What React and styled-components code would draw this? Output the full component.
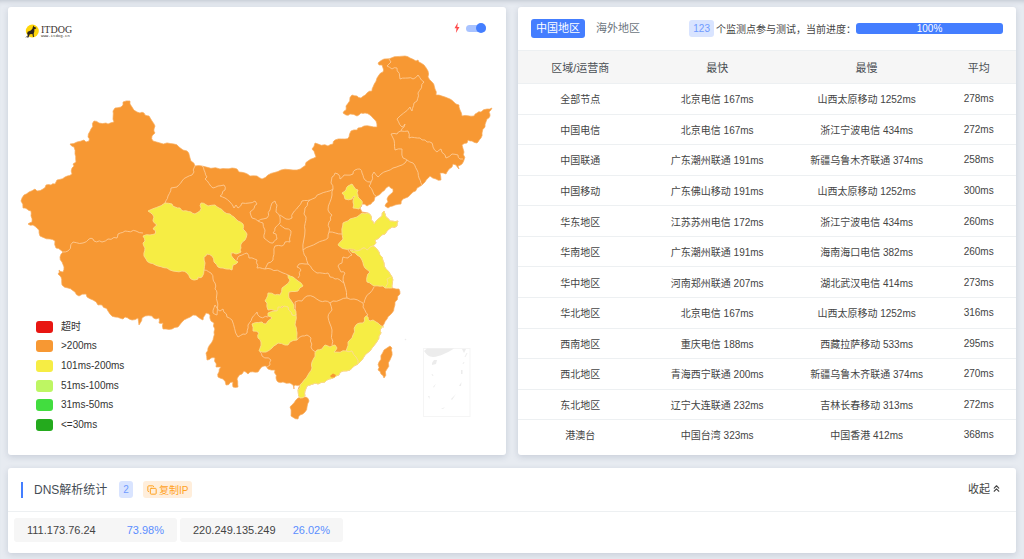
import React from "react";
import styled, { createGlobalStyle } from "styled-components";
import { ChevronsUp, Copy } from "lucide-react";

const GlobalStyle = createGlobalStyle`
  *, *::before, *::after { box-sizing: border-box; }
  body {
    margin: 0;
    background: #e7ebf1;
    color: #444;
    font-family: "Liberation Sans", "Noto Sans CJK SC", sans-serif;
    font-size: 10px;
  }
  button { font-family: inherit; border: 0; cursor: pointer; }
`;

const Page = styled.main`
  display: grid;
  grid-template-columns: 1fr 1fr;
  gap: 13px 12px;
  padding: 7px 8px 6px;
  box-shadow: inset 0 5px 5px -4px rgba(90, 105, 125, 0.3);
`;

const Card = styled.section`
  background: #fff;
  border-radius: 3px;
  box-shadow: 0 2px 6px rgba(60, 80, 110, 0.18);
  grid-column: ${(p) => (p.$wide ? "1 / -1" : "auto")};
  min-width: 0;
`;

/* ---------- map card ---------- */

const MapHeader = styled.header`
  display: flex;
  justify-content: space-between;
  align-items: flex-start;
  height: 37px;
  padding: 14px 20px 0 17px;
`;

const Logo = styled.a`
  display: flex;
  align-items: center;
  gap: 2px;
  padding-top: 3px;
  color: #3a3330;
  text-decoration: none;
`;

const LogoWords = styled.span`
  display: flex;
  flex-direction: column;
  font-family: "Liberation Serif", serif;
  font-size: 10px;
  line-height: 9px;
  small {
    font-family: "Liberation Mono", monospace;
    font-size: 4px;
    line-height: 4px;
  }
`;

const SwitchLabel = styled.label`
  display: flex;
  align-items: center;
  gap: 6px;
  height: 14px;
`;

const Switch = styled.input`
  appearance: none;
  position: relative;
  width: 20px;
  height: 7px;
  margin: 0;
  border-radius: 4px;
  background: #a9c3ff;
  &::before {
    content: "";
    position: absolute;
    top: -2px;
    left: 0;
    width: 10px;
    height: 10px;
    border-radius: 50%;
    background: #447eff;
  }
  &:checked::before { left: 10px; }
`;

const MapStage = styled.div`
  display: grid;
  > * { grid-area: 1 / 1; }
`;

const MapSvg = styled.svg`
  display: block;
  width: 100%;
  height: auto;
`;

const Legend = styled.ul`
  display: grid;
  grid-auto-rows: 1fr;
  align-self: end;
  justify-self: start;
  height: 118px;
  margin: 0 0 20px 28px;
  padding: 0;
  list-style: none;
  z-index: 1;
`;

const LegendItem = styled.li`
  display: flex;
  align-items: center;
  gap: 8px;
  color: #333;
  line-height: 14px;
  &::before {
    content: "";
    width: 17px;
    height: 12px;
    border-radius: 3px;
    background: ${(p) => p.$color};
  }
`;

/* ---------- statistics card ---------- */

const StatsHeader = styled.header`
  display: flex;
  align-items: center;
  justify-content: space-between;
  height: 43px;
  padding: 0 13px;
`;

const Tabs = styled.div`
  display: flex;
  gap: 6px;
`;

const Tab = styled.button`
  height: 19px;
  padding: 0 5px;
  border-radius: 3px;
  font-size: 11px;
  line-height: 17px;
  background: ${(p) => (p.$active ? "#447eff" : "transparent")};
  color: ${(p) => (p.$active ? "#fff" : "#6c757d")};
`;

const Progress = styled.div`
  display: flex;
  align-items: center;
  white-space: nowrap;
`;

const Badge = styled.span`
  display: inline-flex;
  align-items: center;
  justify-content: center;
  height: 17px;
  padding: 0 4px;
  border-radius: 3px;
  background: #d9e4ff;
  color: #6f9bff;
  font-size: 10px;
`;

const ProgressText = styled.span`
  margin-left: 2px;
`;

const ProgressBar = styled.div`
  width: 147px;
  height: 11px;
  overflow: hidden;
  border-radius: 3px;
  background: #e9ecef;
`;

const ProgressFill = styled.div`
  height: 100%;
  background: #447eff;
  color: #fff;
  text-align: center;
  line-height: 11px;
`;

const Table = styled.table`
  width: 100%;
  height: 399px;
  table-layout: fixed;
  border-collapse: separate;
  border-spacing: 0;
  text-align: center;
  th, td {
    padding: 0;
    border-bottom: 1px solid #edf0f2;
    white-space: nowrap;
  }
  th {
    height: 34px;
    border-top: 1px solid #edf0f2;
    background: #f6f6f6;
    color: #4a4f54;
    font-size: 11px;
    font-weight: 400;
  }
  tbody tr:last-child td { border-bottom: 0; }
`;

const HeadCell = styled.th`
  width: ${(p) => p.$width};
`;

/* ---------- DNS card ---------- */

const DnsHeader = styled.header`
  display: flex;
  align-items: center;
  height: 44px;
  padding: 0 14px 0 13px;
  border-bottom: 1px solid #edf0f2;
`;

const DnsTitle = styled.h2`
  margin: 0 12px 0 0;
  padding-left: 11px;
  border-left: 2px solid #447eff;
  color: #454d55;
  font-size: 12px;
  font-weight: 400;
  line-height: 16px;
`;

const CopyButton = styled.button`
  display: flex;
  align-items: center;
  gap: 2px;
  height: 17px;
  margin-left: 10px;
  padding: 0 4px;
  border-radius: 3px;
  background: #ffeedb;
  color: #ffa21f;
  font-size: 10px;
`;

const FoldButton = styled.button`
  display: flex;
  align-items: center;
  gap: 1px;
  margin-left: auto;
  padding: 0 0 3px;
  background: none;
  color: #444;
  font-size: 11px;
`;

const IpList = styled.ul`
  display: flex;
  flex-wrap: wrap;
  gap: 3px;
  margin: 0;
  padding: 6px 6px 11px;
  list-style: none;
`;

const IpItem = styled.li`
  display: flex;
  align-items: center;
  justify-content: space-between;
  width: 163px;
  height: 24px;
  padding: 0 13px;
  border-radius: 3px;
  background: #f6f6f6;
  font-size: 11px;
  span:last-child { color: #5b8eff; }
`;

/* ---------- data ---------- */

const legend = [
  ["超时", "#e81612"],
  [">200ms", "#f79833"],
  ["101ms-200ms", "#f6ed44"],
  ["51ms-100ms", "#bef663"],
  ["31ms-50ms", "#42dd3f"],
  ["<=30ms", "#24aa1d"],
];

const rows = [
  ["全部节点", "北京电信 167ms", "山西太原移动 1252ms", "278ms"],
  ["中国电信", "北京电信 167ms", "浙江宁波电信 434ms", "272ms"],
  ["中国联通", "广东潮州联通 191ms", "新疆乌鲁木齐联通 374ms", "258ms"],
  ["中国移动", "广东佛山移动 191ms", "山西太原移动 1252ms", "300ms"],
  ["华东地区", "江苏苏州电信 172ms", "浙江宁波电信 434ms", "260ms"],
  ["华南地区", "广东潮州联通 191ms", "海南海口电信 382ms", "260ms"],
  ["华中地区", "河南郑州联通 207ms", "湖北武汉电信 414ms", "273ms"],
  ["华北地区", "北京电信 167ms", "山西太原移动 1252ms", "316ms"],
  ["西南地区", "重庆电信 188ms", "西藏拉萨移动 533ms", "295ms"],
  ["西北地区", "青海西宁联通 200ms", "新疆乌鲁木齐联通 374ms", "270ms"],
  ["东北地区", "辽宁大连联通 232ms", "吉林长春移动 313ms", "272ms"],
  ["港澳台", "中国台湾 323ms", "中国香港 412ms", "368ms"],
];

const columns = [
  ["区域/运营商", "25%"],
  ["最快", "30%"],
  ["最慢", "30%"],
  ["平均", "15%"],
];

const ips = [
  ["111.173.76.24", "73.98%"],
  ["220.249.135.249", "26.02%"],
];

const mainland =
  "43,189 46,185 51,185 55,184 57,180 65,177 72,174 72,168 74,166 73,164 76,162 75,154 74,147 70,144 77,142 84,140 86,142 89,141 88,137 91,129 94,121 99,123 106,123 108,124 114,122 113,111 115,108 121,107 123,105 123,102 130,101 130,104 132,107 137,112 140,113 144,113 145,115 149,116 152,121 155,126 154,129 155,133 152,136 153,141 160,143 174,144 179,147 183,150 187,151 190,158 195,166 202,166 220,169 232,168 237,169 239,172 245,173 250,176 257,176 262,179 268,175 281,170 297,170 303,167 308,161 316,157 312,149 315,143 328,146 333,144 335,140 345,139 349,137 351,131 357,130 358,128 364,126 377,127 376,121 370,115 365,113 361,113 357,116 350,114 346,115 343,113 346,110 346,106 352,95 357,96 361,98 367,93 372,91 373,87 377,78 379,75 383,72 383,68 382,65 379,65 378,63 384,59 405,56 410,58 416,61 418,60 421,63 424,65 428,71 428,77 432,82 435,89 436,95 445,97 450,99 456,104 459,105 459,107 460,110 462,116 474,116 477,113 481,112 487,109 492,108 489,112 490,116 487,119 485,127 482,133 481,138 478,142 477,143 472,141 468,140 467,143 462,145 464,152 464,160 462,164 458,166 459,169 456,165 453,164 452,167 447,172 446,174 440,173 441,180 436,179 430,176 425,182 422,185 413,192 408,197 403,199 401,204 395,205 388,208 385,206 388,202 387,199 393,192 393,189 389,186 386,188 382,192 375,197 374,201 371,204 367,206 362,204 360,208 362,212 368,213 371,216 371,220 374,224 377,220 382,216 384,211 386,217 390,221 398,221 397,226 392,227 387,231 385,234 380,237 375,240 376,243 373,246 376,248 379,252 382,257 384,263 386,269 392,277 392,288 396,289 399,289 400,294 395,302 394,308 392,313 387,319 384,324 382,327 380,330 381,333 379,336 376,343 372,348 365,355 361,361 358,364 354,366 350,370 343,371 336,376 333,378 329,379 327,380 325,382 318,384 313,384 307,386 305,391 305,396 300,398 298,390 300,385 295,385 294,389 293,385 290,383 283,382 278,382 276,378 275,370 268,369 266,366 264,366 260,369 258,372 250,372 248,374 244,371 242,374 238,377 237,379 238,387 233,387 233,382 226,385 223,379 218,377 219,372 221,367 216,367 215,358 211,358 207,360 206,353 208,348 213,340 214,332 214,323 211,321 210,315 206,313 203,320 198,317 193,315 182,322 178,327 172,329 163,329 163,323 159,323 159,318 156,319 152,316 145,316 142,318 139,325 138,318 132,320 125,317 123,319 115,317 110,314 108,311 102,305 98,305 93,300 87,297 86,294 79,296 75,292 68,288 62,285 61,277 58,274 59,270 63,272 64,267 62,262 60,257 63,252 56,248 55,241 50,239 40,236 39,230 33,225 28,224 32,222 31,216 31,211 27,209 23,208 21,201 24,195 29,192 35,189 37,191";

const islands = [
  "306,397 309,401 307,407 305,412 300,415 298,419 291,416 290,407 294,403 298,398",
  "390,346 392,348 392,352 390,360 387,369 384,378 381,374 378,370 379,362 384,350",
];

const borders = [
  "195,166 194,168 194,172 192,175 187,177 182,181 177,187 171,188 168,196 165,203",
  "143,233 136,231 125,231 118,234 117,238 108,239 102,242 94,241 93,239 89,239 83,243 73,242 68,251 63,252",
  "202,166 204,170 207,177 205,179 213,188 218,186 224,185 225,190 220,196 225,198 230,202 234,208 236,205 238,208 242,203 249,203 255,201 257,204 250,212 252,218 258,221 263,223 265,230 264,238 269,242 273,243 277,239 276,234 273,233 275,228 280,223 280,217 276,212 277,205 275,201 272,203 270,210 267,218 258,221",
  "280,215 286,219 292,218 293,213 298,207 302,201 310,200 320,194 333,189 331,183 332,177 335,173 338,174 340,179 344,175 353,174 355,170 360,169 362,173 365,180 371,182 374,172 378,177 381,174 393,168 399,166 405,163 407,160",
  "280,225 291,231 290,242 285,242 282,246 275,246 274,252 273,260 268,263 265,269 271,269 283,273 288,275",
  "237,260 239,256 242,255 247,253 249,258 257,260 257,268 265,269",
  "310,200 305,208 304,214 306,217 305,230 303,250 306,257 308,264 299,264 297,267 301,270 298,278",
  "308,264 312,269 317,273 328,273 330,277 335,279 340,280 344,283 346,290 347,298 340,300 333,301 330,303 325,301 320,301 314,297 307,296 302,301 295,302",
  "333,189 332,195 328,210 332,215 329,222 329,232 328,238 317,243 303,250",
  "329,232 342,234",
  "348,250 352,255 348,258 343,257 342,263 338,266 341,272 345,273 343,280 344,283",
  "371,182 369,186 373,192 376,196",
  "407,160 413,163 417,170 419,178 422,185",
  "389,59 391,62 387,66 392,69 397,68 400,79 408,78 413,79 418,75 424,82 418,93 417,101 414,103 412,111 410,107 397,119 402,127 405,124 404,127 401,131 397,134 391,134 394,140 395,150 402,149 403,158 407,160",
  "401,131 408,131 409,138 420,138 427,142 432,143 433,147 437,152 441,149 446,158 452,154 458,155 460,159 463,159",
  "347,298 354,299 363,303 363,307 368,315 366,316",
  "374,287 370,293 366,297 364,303",
  "330,303 332,310 328,317 330,324 332,330 332,345",
  "297,340 302,336 307,335 311,338 311,347 314,351 316,352",
  "260,352 262,356 271,360 270,365 267,367",
  "204,270 211,273 213,279 215,283 215,289 217,293 217,315 213,313 215,305 217,308 220,311 223,309 227,317 232,320 238,337 243,334 247,333 248,325 252,318 257,312 260,317 268,317",
  "295,302 296,315",
];

const yellowAreas = [
  "148,211 165,203 172,204 175,207 180,208 183,211 191,212 195,214 200,211 201,203 208,206 215,205 219,208 224,212 230,214 234,217 238,221 243,224 243,229 247,234 245,240 241,244 241,248 240,250 241,252 236,254 231,253 233,258 238,262 233,265 232,270 227,269 223,268 218,267 214,262 212,256 207,254 204,257 205,263 204,270 202,277 198,277 198,279 194,280 190,278 187,273 182,271 173,271 167,268 158,266 150,263 146,259 144,256 145,248 143,243 145,241 143,236 150,235 155,234 155,230 153,229 157,225 153,221 154,217 151,213",
  "342,193 346,190 348,186 352,184 354,187 358,190 357,193 358,197 361,200 362,204 359,209 353,208 353,202 355,196 352,199 345,199",
  "357,217 362,213 368,213 371,216 371,220 374,224 377,220 382,216 384,211 386,217 390,221 398,221 397,226 392,227 387,231 385,234 380,237 375,240 376,243 373,246 370,247 367,250 363,248 357,251 350,249 345,249 338,245 343,239 342,232 343,223 350,219",
  "350,250 357,251 363,248 367,250 370,247 373,246 376,248 379,252 382,257 384,263 386,269 392,277 392,288 385,288 383,286 374,286 367,282 367,277 370,272 365,268 362,260 357,255",
  "288,275 293,277 298,281 301,283 303,286 298,291 289,292 289,298 292,302 294,305 296,315 292,315 288,307 282,306 277,311 268,310 267,303 265,301 268,293 275,295 280,295 282,288 286,285 290,280",
  "252,324 262,322 266,324 268,321 272,318 268,316 268,313 275,311 277,311 278,307 282,308 284,306 288,307 292,315 296,315 295,325 297,333 297,340 290,342 288,345 285,345 278,343 272,348 266,352 259,351 261,342 258,338 259,333 253,331",
  "366,316 368,317 370,321 373,320 376,322 380,325 384,327 382,327 380,330 381,333 379,336 376,343 372,348 365,355 361,361 358,364 356,357 352,351 346,351 348,342 353,335 356,325 360,323 363,323",
  "300,398 298,390 302,383 308,375 312,368 312,362 317,350 322,349 325,345 330,347 335,345 337,348 334,352 346,351 352,351 356,357 358,364 354,366 350,370 343,371 336,376 333,378 329,379 327,380 325,382 318,384 313,384 307,386 305,391 305,396",
];

/* Breaks each long edge with a bent midpoint. The bend depends only on the
   two end points, so an edge shared by two areas bends the same way in both. */
function roughen(text, closed) {
  const pts = text.split(" ").map((p) => p.split(",").map(Number));
  const out = [];
  pts.forEach((a, i) => {
    out.push(a);
    if (!closed && i === pts.length - 1) return;
    const b = pts[(i + 1) % pts.length];
    const length = Math.hypot(b[0] - a[0], b[1] - a[1]);
    if (length < 4) return;
    const forward = a[0] < b[0] || (a[0] === b[0] && a[1] < b[1]);
    const [p, q] = forward ? [a, b] : [b, a];
    const steps = Math.max(2, Math.min(4, Math.round(length / 3)));
    const mids = [];
    for (let s = 1; s < steps; s += 1) {
      const bend = (((p[0] * 7 + p[1] * 13 + q[0] * 5 + q[1] * 3 + s * 11) % 9) - 4) / 5;
      mids.push([
        p[0] + ((q[0] - p[0]) * s) / steps - ((q[1] - p[1]) / length) * bend,
        p[1] + ((q[1] - p[1]) * s) / steps + ((q[0] - p[0]) / length) * bend,
      ]);
    }
    out.push(...(forward ? mids : mids.reverse()));
  });
  return out.map(([x, y]) => `${x.toFixed(1)},${y.toFixed(1)}`).join(" ");
}

function ChinaMap() {
  return (
    <MapSvg viewBox="8 44 498 411" role="img" aria-label="中国地图">
      <g fill="#f79833" stroke="#f8ac5c" strokeWidth=".7" strokeLinejoin="round">
        <polygon points={roughen(mainland, true)} />
        {islands.map((p) => <polygon key={p} points={roughen(p, true)} />)}
      </g>
      <g fill="none" stroke="#fdc993" strokeWidth=".9" strokeLinejoin="round">
        {borders.map((p) => <polyline key={p} points={roughen(p, false)} />)}
      </g>
      <g fill="#f6ed44" stroke="#fadf8b" strokeWidth=".9" strokeLinejoin="round">
        {yellowAreas.map((p) => <polygon key={p} points={roughen(p, true)} />)}
        <polyline points="391,277 387,279 388,283 385,288" fill="none" />
      </g>
      <path d="M330 376l3-2.500 3 1.500-1.500 2.500h-3z" fill="#f79833" />
      <g fill="#ececec">
        <rect x="423.500" y="348.500" width="46.500" height="68" fill="none" stroke="#f5f5f5" />
        <path d="M424 351l3-2.500h27c-6 4-14 8-21 8.500-4 0-7-3-9-6zM462 349h4l-2 4zM432 363l2-3h3l-1 4-4 1zM461 370h1.500v4H461zM428 396h1.500v3zM459 386l2.500-4-.5 4zM433 387l3-3.500-2 4zM451 399l5-5-4 6zM441 409l4-2-2 2z" />
        <path d="M432 374l1 2M467 353l-2 4M463 364l1-2" stroke="#eee" />
        <circle cx="405.500" cy="339.500" r=".8" />
      </g>
    </MapSvg>
  );
}

export default function App() {
  return (
    <>
      <GlobalStyle />
      <Page lang="zh-CN">
        <Card>
          <MapHeader>
            <Logo href="#" aria-label="ITDOG">
              <svg width="14" height="14" viewBox="0 0 14 14" aria-hidden="true">
                <circle cx="7.300" cy="7" r="6.500" fill="#ffd60a" />
                <path d="M8.300 1.300l.7 1.400 2.300 1-.3 1-1.600.3-.1 2.800-.6 1.800.2 3.400H8l-.6-3-2.600.2-.7 1.600-.6 1.700H2l.9-2.400-.8-1.600.6-1.800 3-1.200 1.700-1.700z" fill="#2b2320" />
                <path d="M1 13.500l1.500-1.700" stroke="#2b2320" strokeWidth=".7" />
              </svg>
              <LogoWords>
                ITDOG
                <small>www.itdog.cn</small>
              </LogoWords>
            </Logo>
            <SwitchLabel>
              <svg width="6" height="12" viewBox="0 0 6 12" aria-hidden="true">
                <path d="M3.800.5L.5 6.200h2L1.900 11 5.500 4.900H3.300z" fill="#ff4b4b" />
              </svg>
              <Switch type="checkbox" role="switch" defaultChecked aria-label="快速模式" />
            </SwitchLabel>
          </MapHeader>
          <MapStage>
            <ChinaMap />
            <Legend>
              {legend.map(([text, color]) => (
                <LegendItem key={text} $color={color}>{text}</LegendItem>
              ))}
            </Legend>
          </MapStage>
        </Card>

        <Card>
          <StatsHeader>
            <Tabs>
              <Tab type="button" $active>中国地区</Tab>
              <Tab type="button">海外地区</Tab>
            </Tabs>
            <Progress>
              <Badge>123</Badge>
              <ProgressText>个监测点参与测试，当前进度：</ProgressText>
              <ProgressBar role="progressbar" aria-valuenow={100} aria-valuemin={0} aria-valuemax={100}>
                <ProgressFill style={{ width: "100%" }}>100%</ProgressFill>
              </ProgressBar>
            </Progress>
          </StatsHeader>
          <Table>
            <thead>
              <tr>
                {columns.map(([name, width]) => (
                  <HeadCell key={name} scope="col" $width={width}>{name}</HeadCell>
                ))}
              </tr>
            </thead>
            <tbody>
              {rows.map((row) => (
                <tr key={row[0]}>
                  {row.map((cell, i) => <td key={i}>{cell}</td>)}
                </tr>
              ))}
            </tbody>
          </Table>
        </Card>

        <Card $wide>
          <DnsHeader>
            <DnsTitle>DNS解析统计</DnsTitle>
            <Badge>2</Badge>
            <CopyButton type="button">
              <Copy size={10} strokeWidth={2.4} aria-hidden="true" />
              复制IP
            </CopyButton>
            <FoldButton type="button">
              收起
              <ChevronsUp size={11} strokeWidth={2.4} aria-hidden="true" />
            </FoldButton>
          </DnsHeader>
          <IpList>
            {ips.map(([ip, share]) => (
              <IpItem key={ip}>
                <span>{ip}</span>
                <span>{share}</span>
              </IpItem>
            ))}
          </IpList>
        </Card>
      </Page>
    </>
  );
}
